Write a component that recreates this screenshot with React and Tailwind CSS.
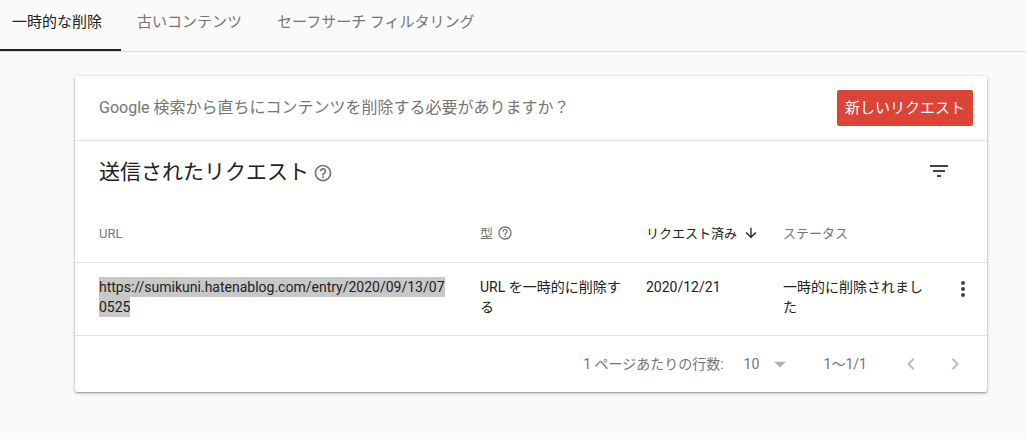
import { useState } from 'react'
import {
  MdArrowDownward,
  MdArrowDropDown,
  MdChevronLeft,
  MdChevronRight,
  MdFilterList,
  MdHelpOutline,
  MdMoreVert,
} from 'react-icons/md'

const TABS = ['一時的な削除', '古いコンテンツ', 'セーフサーチ フィルタリング']

const REQUESTS = [
  {
    url: 'https://sumikuni.hatenablog.com/entry/2020/09/13/070525',
    type: 'URL を一時的に削除する',
    date: '2020/12/21',
    status: '一時的に削除されました',
  },
]

export default function App() {
  const [activeTab, setActiveTab] = useState(0)
  const [pageSize, setPageSize] = useState('10')

  return (
    <div
      lang="ja"
      className="min-h-screen overflow-x-hidden bg-[#fafafa] font-[Roboto,'Noto_Sans_CJK_JP',sans-serif] text-[#212121]"
    >
      <nav className="-ml-1 flex border-b border-[#dadada]">
        {TABS.map((tab, index) => (
          <Tab key={tab} label={tab} active={index === activeTab} onClick={() => setActiveTab(index)} />
        ))}
      </nav>

      <main className="mt-6 mr-[39px] ml-[75px] rounded-xs bg-white shadow-[0_1px_2px_rgba(0,0,0,0.35),0_1px_4px_rgba(0,0,0,0.15)]">
        <div className="flex h-[65px] items-center justify-between border-b border-[#e0e0e0] pr-3.5 pl-6">
          <p className="text-base text-[#757575]">Google 検索から直ちにコンテンツを削除する必要がありますか？</p>
          <button type="button" className="h-9 rounded-xs bg-[#db4437] px-2 text-[15px] text-white">
            新しいリクエスト
          </button>
        </div>

        <div className="flex h-16 items-center justify-between pr-9 pl-6">
          <div className="flex items-center gap-1">
            <h1 className="text-[21px]">送信されたリクエスト</h1>
            <button type="button" aria-label="ヘルプ" className="text-[#757575]">
              <MdHelpOutline size={20} />
            </button>
          </div>
          <button type="button" aria-label="フィルタ" className="mb-1 text-[#424242]">
            <MdFilterList size={24} />
          </button>
        </div>

        <table className="w-full table-fixed text-left">
          <thead>
            <tr className="h-[57px] border-b border-[#e0e0e0] text-[13px] text-[#757575]">
              <th className="pl-6 font-normal">URL</th>
              <th className="w-[166px] font-normal">
                <span className="flex items-center gap-1">
                  型
                  <MdHelpOutline size={16} />
                </span>
              </th>
              <th className="w-[137px] font-normal text-[#212121]">
                <span className="flex items-center gap-1.5">
                  リクエスト済み
                  <MdArrowDownward size={16} />
                </span>
              </th>
              <th className="w-[164px] font-normal">ステータス</th>
              <td className="w-10"></td>
            </tr>
          </thead>
          <tbody>
            {REQUESTS.map((request) => (
              <tr key={request.url} className="border-b border-[#e0e0e0] align-top text-sm">
                <td className="pt-3.5 pr-7 pb-[18px] pl-6 break-all">
                  <span className="bg-[#c8c8c8] py-0.5">{request.url}</span>
                </td>
                <td className="pt-3.5 pr-4">{request.type}</td>
                <td className="pt-3.5">{request.date}</td>
                <td className="pt-3.5 pr-4">{request.status}</td>
                <td className="pt-3.5 pl-1">
                  <button type="button" aria-label="メニュー" className="block text-[#424242]">
                    <MdMoreVert size={24} />
                  </button>
                </td>
              </tr>
            ))}
          </tbody>
        </table>

        <div className="flex h-14 items-center justify-end pr-5 text-sm text-[#757575]">
          <label htmlFor="page-size">1 ページあたりの行数:</label>
          <div className="relative ml-5 flex items-center">
            <select
              id="page-size"
              value={pageSize}
              onChange={(e) => setPageSize(e.target.value)}
              className="w-[50px] appearance-none bg-transparent"
            >
              <option>10</option>
              <option>25</option>
              <option>50</option>
            </select>
            <MdArrowDropDown size={28} className="pointer-events-none absolute right-0 text-[#b0b0b0]" />
          </div>
          <span className="ml-[30px]">1〜1/1</span>
          <div className="ml-8 flex gap-5 text-[#bdbdbd]">
            <button type="button" aria-label="前のページ">
              <MdChevronLeft size={24} />
            </button>
            <button type="button" aria-label="次のページ">
              <MdChevronRight size={24} />
            </button>
          </div>
        </div>
      </main>
    </div>
  )
}

function Tab({ label, active, onClick }) {
  return (
    <button
      type="button"
      onClick={onClick}
      className={`h-[51px] border-b-2 pr-[19px] pb-1 pl-4 text-[15px] ${
        active ? 'border-[#212121] text-[#212121]' : 'border-transparent text-[#757575]'
      }`}
    >
      {label}
    </button>
  )
}
